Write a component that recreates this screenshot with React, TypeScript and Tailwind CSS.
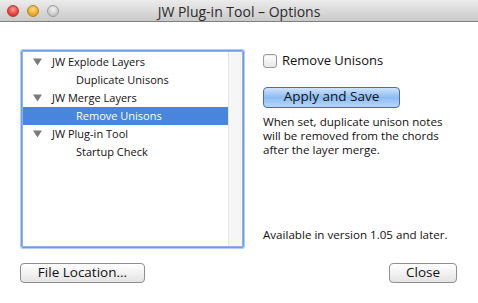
import React from 'react'

type Row = { label: string; level: number; selected?: boolean }

const rows: Row[] = [
  { label: 'JW Explode Layers', level: 0 },
  { label: 'Duplicate Unisons', level: 1 },
  { label: 'JW Merge Layers', level: 0 },
  { label: 'Remove Unisons', level: 1, selected: true },
  { label: 'JW Plug-in Tool', level: 0 },
  { label: 'Startup Check', level: 1 },
]

const Light = ({ className }: { className: string }) => (
  <span className={`block w-[12px] h-[12px] rounded-full border ${className}`} />
)

const Triangle = () => (
  <svg width="9" height="8" viewBox="0 0 9 8" className="block">
    <path d="M0 0.5 L9 0.5 L4.5 7.5 Z" fill="#7b7b7b" />
  </svg>
)

const App = () => {
  return (
    <div className="w-[478px] h-[303px] bg-white flex flex-col overflow-hidden text-[#111]" style={{ fontFamily: '"Lucida Grande", "Open Sans", sans-serif' }}>
      {/* title bar */}
      <div className="relative h-[22px] shrink-0 flex items-center bg-gradient-to-b from-[#ececec] to-[#c9c9c9] border-b border-[#808080]">
        <div className="flex items-center gap-[8px] pl-[7px]">
          <Light className="bg-[radial-gradient(circle_at_50%_35%,#ff9a94,#e0342c_70%)] border-[#b03a33]" />
          <Light className="bg-[radial-gradient(circle_at_50%_35%,#ffe08a,#e59f1a_70%)] border-[#b98326]" />
          <Light className="bg-[radial-gradient(circle_at_50%_35%,#f4f4f4,#c4c4c4_70%)] border-[#9c9c9c]" />
        </div>
        <div className="absolute inset-0 flex items-center justify-center text-[14px] text-[#2b2b2b] pt-[1px]">
          JW Plug-in Tool – Options
        </div>
      </div>

      <div className="flex-1 flex flex-col">
        <div className="flex pt-[28px] pl-[21px]">
          {/* outline list */}
          <div className="w-[223px] h-[198px] border border-[#6b9de0] rounded-[2px] shadow-[0_0_0_1px_#b3cff2] flex">
            <div className="flex-1 border border-[#8fb5ea] flex bg-white">
              <div className="flex-1 pt-[1px]">
                {rows.map((r) => (
                  <div
                    key={r.label}
                    className={`h-[18px] flex items-center text-[11px] ${r.selected ? 'bg-[#4786dc] text-white' : ''}`}
                  >
                    {r.level === 0 ? (
                      <>
                        <span className="w-[9px] ml-[10px] mr-[10px]">
                          <Triangle />
                        </span>
                        <span>{r.label}</span>
                      </>
                    ) : (
                      <span className="ml-[53px]">{r.label}</span>
                    )}
                  </div>
                ))}
              </div>
              <div className="w-[14px] bg-[#f6f6f6] border-l border-[#e6e6e6]" />
            </div>
          </div>

          {/* right pane */}
          <div className="ml-[19px] flex flex-col pt-[1px]">
            <label className="flex items-center gap-[5px] text-[13px]">
              <span className="w-[14px] h-[14px] rounded-[3px] border border-[#9a9a9a] bg-gradient-to-b from-white to-[#e8e8e8] shadow-[inset_0_1px_1px_rgba(0,0,0,0.08)]" />
              Remove Unisons
            </label>
            <button className="mt-[16px] w-[137px] h-[21px] rounded-[4px] border border-[#4a6fa8] bg-gradient-to-b from-[#cfe3fb] via-[#8dbcf2] to-[#b5d6fb] text-[13.5px] text-[#111] leading-none">
              Apply and Save
            </button>
            <p className="mt-[7px] text-[11.6px] leading-[14px] w-[190px]">
              When set, duplicate unison notes will be removed from the chords after the layer merge.
            </p>
            <p className="mt-[69px] text-[11.6px]">Available in version 1.05 and later.</p>
          </div>
        </div>

        <div className="flex justify-between pl-[20px] pr-[21px] mt-[15px]">
          <button className="w-[125px] h-[20px] rounded-[4px] border border-[#8e8e8e] bg-gradient-to-b from-white to-[#e4e4e4] text-[13.5px] leading-none">
            File Location...
          </button>
          <button className="w-[68px] h-[20px] rounded-[4px] border border-[#8e8e8e] bg-gradient-to-b from-white to-[#e4e4e4] text-[13.5px] leading-none">
            Close
          </button>
        </div>
      </div>
    </div>
  )
}

export default App
